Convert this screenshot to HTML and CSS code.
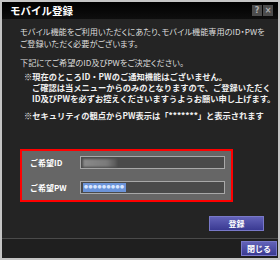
FILE: index.html
```html
<!DOCTYPE html>
<html lang="ja">
  <head>
    <meta charset="UTF-8" />
    <title>モバイル登録</title>
    <link rel="stylesheet" href="styles.css">
  </head>
  <body>
    <div class="window">
      <div class="titlebar">
        <span class="title">モバイル登録</span>
        <span class="tb-btn">?</span>
        <span class="tb-btn">×</span>
      </div>
      <div class="content">
        <p class="intro">
          モバイル機能をご利用いただくにあたり、モバイル機能専用のID・PWを<br />ご登録いただく必要がございます。
        </p>
        <p class="lead">下記にてご希望のID及びPWをご決定ください。</p>
        <p class="note">
          ※現在のところID・PWのご通知機能はございません。<br />ご確認は当メニューからのみのとなりますので、ご登録いただく<br />ID及びPWを必ずお控えくださいますうようお願い申し上げます。
        </p>
        <p class="note last">※セキュリティの観点からPW表示は「*******」と表示されます</p>

        <div class="form-box">
          <div class="row">
            <span class="label">ご希望ID</span>
            <div class="field"><span class="blurred"></span></div>
          </div>
          <div class="row">
            <span class="label">ご希望PW</span>
            <div class="field"><span class="selected">●●●●●●●●●</span></div>
          </div>
        </div>

        <div class="actions">
          <button class="btn btn-register">登録</button>
        </div>
      </div>
      <div class="footer">
        <button class="btn btn-close">閉じる</button>
      </div>
    </div>
  </body>
</html>
```

FILE: styles.css
```css
/* mobile register dialog */
body {
  margin: 0;
  background: #ffffff;
  font-family: "Noto Sans CJK JP", "Noto Sans", sans-serif;
}

.window {
  width: 280px;
  height: 260px;
  box-sizing: border-box;
  border: 2px solid #c4c4c4;
  background: #242424;
  display: flex;
  flex-direction: column;
}

.titlebar {
  height: 17px;
  background: linear-gradient(#000000, #0e0e0e);
  display: flex;
  align-items: center;
  padding: 0 5px 0 8px;
  gap: 1px;
}

.title {
  flex: 1;
  color: #ffffff;
  font-size: 10.5px;
  font-weight: bold;
  line-height: 17px;
}

.tb-btn {
  width: 10px;
  height: 11px;
  background: #4c4c4c;
  color: #b0b0b0;
  font-size: 8px;
  font-weight: bold;
  line-height: 11px;
  text-align: center;
  font-family: "DejaVu Sans", sans-serif;
}

.content {
  flex: 1;
  padding: 6px 14px 0 18px;
  white-space: nowrap;
}

p {
  margin: 0;
}

.intro,
.lead {
  color: #dcdcdc;
  font-size: 8.2px;
  line-height: 12px;
  font-feature-settings: "palt";
}

.lead {
  margin-top: 7px;
}

.note {
  color: #f0f0f0;
  font-size: 8.25px;
  font-weight: bold;
  line-height: 11px;
  margin: 3px 0 0 4px;
  padding-left: 8px;
  text-indent: -8px;
}

.note.last {
  margin-top: 6px;
}

.form-box {
  margin: 28px 0 0 0;
  width: 213px;
  box-sizing: border-box;
  border: 2px solid #ff0000;
  background: #666666;
  padding: 5px 6px 6px 8px;
  display: flex;
  flex-direction: column;
  gap: 12px;
}

.row {
  display: flex;
  align-items: center;
  justify-content: space-between;
}

.label {
  color: #ffffff;
  font-size: 8px;
  font-weight: bold;
  line-height: 13px;
}

.field {
  width: 145px;
  height: 13px;
  box-sizing: border-box;
  border: 1px solid #a8a8a8;
  background: #4a4a4a;
  display: flex;
  align-items: center;
  padding-left: 2px;
}

.blurred {
  width: 34px;
  height: 8px;
  background: linear-gradient(90deg, #8a8a8a, #7a7a7a 70%, #555555);
  filter: blur(1px);
}

.selected {
  background: #6b93d8;
  color: #d8e6ff;
  font-size: 4px;
  line-height: 9px;
  padding: 0 1px;
  letter-spacing: 0.5px;
}

.actions {
  display: flex;
  justify-content: flex-end;
  margin-top: 14px;
}

.btn {
  font-family: inherit;
  font-size: 8px;
  font-weight: bold;
  color: #ffffff;
  border: 1px solid #7878c8;
  background: linear-gradient(#6262b8, #3a3a92);
  padding: 0;
  height: 15px;
  line-height: 13px;
  cursor: pointer;
}

.btn-register {
  width: 55px;
}

.footer {
  border-top: 1px solid #4a4a4a;
  background: #1f1f1f;
  height: 20px;
  box-sizing: border-box;
  display: flex;
  justify-content: flex-end;
  padding: 2px 1px 0 0;
}

.btn-close {
  width: 36px;
}
```
